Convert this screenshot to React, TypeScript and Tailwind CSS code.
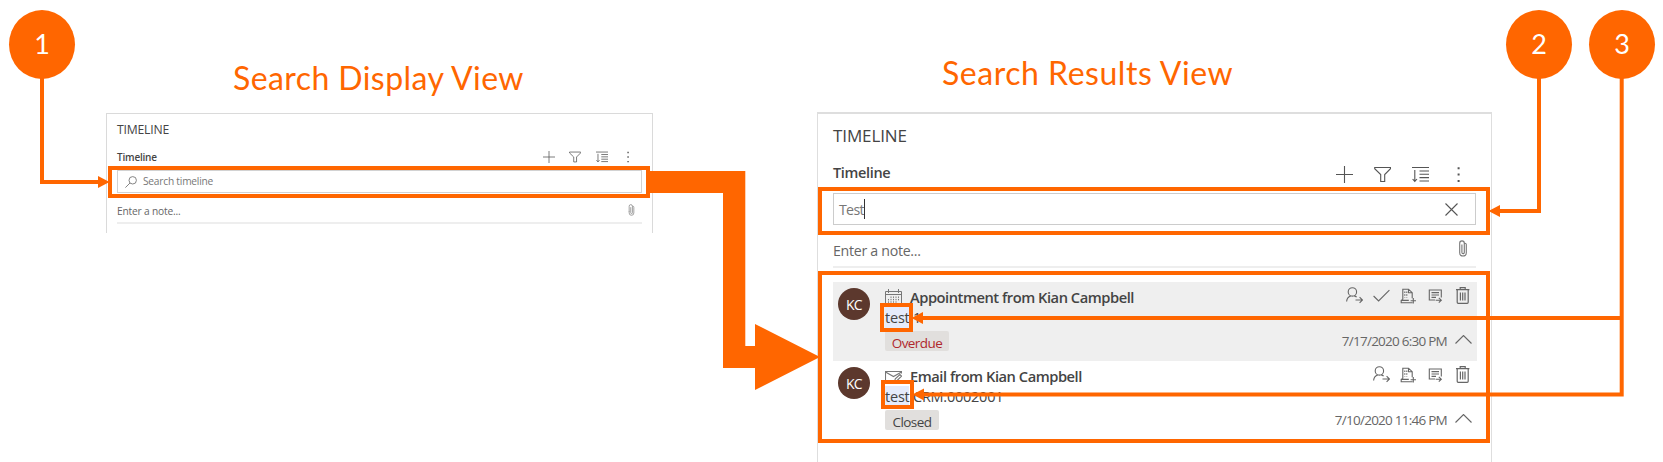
import React from "react";

const ORANGE = "#ff6600";

type IconProps = { className?: string };

const stroke = {
  fill: "none",
  stroke: "currentColor",
  strokeWidth: 1,
} as const;

function Plus({ className }: IconProps) {
  return (
    <svg viewBox="0 0 17 17" className={className} {...stroke} strokeWidth={1.1}>
      <path d="M8.5 0v17M0 8.5h17" />
    </svg>
  );
}

function Filter({ className }: IconProps) {
  return (
    <svg viewBox="0 0 17 17" className={className} {...stroke} strokeWidth={1.1}>
      <path d="M.7 1.5h15.8v1.2l-5.8 5.8v7h-4v-7L.7 2.7z" />
    </svg>
  );
}

function Sort({ className }: IconProps) {
  return (
    <svg viewBox="0 0 17 17" className={className} {...stroke} strokeWidth={1.1}>
      <path d="M0 1.5h17M7.5 5h9.5M7.5 8.3h9.5M7.5 11.6h9.5M7.5 15h9.5M2.8 4v11.3M.6 13l2.2 2.4L5 13" />
    </svg>
  );
}

function Dots({ className }: IconProps) {
  return (
    <svg viewBox="0 0 17 17" className={className} fill="currentColor">
      <path d="M7.6 1.2h2v2h-2zM7.6 7.5h2v2h-2zM7.6 14h2v2h-2z" />
    </svg>
  );
}

function Clip({ className }: IconProps) {
  return (
    <svg viewBox="0 0 8 17" className={className} {...stroke} strokeWidth={1.1}>
      <path d="M.7 11V3.2a2.3 2.3 0 0 1 4.6 0v9.2a1.2 1.2 0 0 1-2.4 0V4.5M5.3 3.2h.5a1.4 1.4 0 0 1 1.5 1.5v8a3.3 3.3 0 0 1-6.6 0V10" />
    </svg>
  );
}

function Magnifier({ className }: IconProps) {
  return (
    <svg viewBox="0 0 12 12" className={className} {...stroke} strokeWidth={0.9}>
      <circle cx="7.7" cy="4.3" r="3.7" />
      <path d="M5 7L.4 11.6" />
    </svg>
  );
}

function Close({ className }: IconProps) {
  return (
    <svg viewBox="0 0 13 13" className={className} {...stroke} strokeWidth={1.1}>
      <path d="M.5.5l12 12M12.5.5l-12 12" />
    </svg>
  );
}

function Calendar({ className }: IconProps) {
  return (
    <svg viewBox="0 0 17 17" className={className} {...stroke}>
      <path d="M.5 2.5h16v13H.5zM.5 5.5h16M3.5 0v4M13.5 0v4" />
      <path strokeDasharray="1.4 1" d="M3.5 10v4M6 7.5v6.5M8.5 7.5v6.5M11 7.5v6.5M13.5 7.5v4" />
    </svg>
  );
}

function Mail({ className }: IconProps) {
  return (
    <svg viewBox="0 0 17 12" className={className} {...stroke} strokeWidth={1.1}>
      <path d="M8 11.5H.5V1.5h16v2M.5 2l8 4.5 8-4.5" />
      <path d="M9.5 11.5l.8-2.6 4.6-4.4 1.6 1.6-4.6 4.6z" />
    </svg>
  );
}

function Assign({ className }: IconProps) {
  return (
    <svg viewBox="0 0 17 17" className={className} {...stroke} strokeWidth={1.1}>
      <circle cx="6.4" cy="4.9" r="4.2" />
      <path d="M.6 14.5c.3-3 2-4.7 4.2-5.4M8.2 8.9c1 .2 1.8.6 2.4 1.3M9.5 13h6.8M13.6 10.2l2.8 2.8-2.8 2.8" />
    </svg>
  );
}

function Check({ className }: IconProps) {
  return (
    <svg viewBox="0 0 17 17" className={className} {...stroke} strokeWidth={1.1}>
      <path d="M.6 9l5 5L16.4 3.2" />
    </svg>
  );
}

function AddDoc({ className }: IconProps) {
  return (
    <svg viewBox="0 0 17 17" className={className} {...stroke} strokeWidth={1.1}>
      <path d="M2.8 12.5V2.2h5.7l3.7 3.5v5.6M8.5 2.2v3.6h3.7M2.800 12.500l-1.600.8v2.500h11.300M1.200 13.400h7.600M13.300 11v5.500M10.600 13.700H16" />
      <path strokeDasharray="1.5 1.2" d="M4.800 4.500v6M6.800 4.500v6" />
    </svg>
  );
}

function Queue({ className }: IconProps) {
  return (
    <svg viewBox="0 0 17 17" className={className} {...stroke} strokeWidth={1.1}>
      <path d="M8 13H2.300V3h12v7.500M4.500 5.600h7.500M4.500 8h7.500M4.500 10.400h4.500M8.600 13.200h5.600M11.800 10.800l2.500 2.400-2.500 2.400" />
    </svg>
  );
}

function Trash({ className }: IconProps) {
  return (
    <svg viewBox="0 0 17 17" className={className} {...stroke} strokeWidth={1.2}>
      <path d="M2 2.7h13.4M6.2 2.5V.7h5v1.8M3.2 2.7v12.6q0 1 1 1h9q1 0 1-1V2.7M6.4 5.5v8M8.7 5.5v8M11 5.5v8" />
    </svg>
  );
}

function Chevron({ className }: IconProps) {
  return (
    <svg viewBox="0 0 17 9" className={className} {...stroke} strokeWidth={1.1}>
      <path d="M.5 8.5l8-8 8 8" />
    </svg>
  );
}

type EntryProps = {
  kind: "appointment" | "email";
  title: string;
  rest: string;
  status: string;
  date: string;
};

function Entry({ kind, title, rest, status, date }: EntryProps) {
  const appt = kind === "appointment";
  return (
    <div className={`flex h-[79px] w-[644px] ${appt ? "bg-[#efefef]" : "bg-white"}`}>
      <div className="ml-[5px] mt-1.5 flex size-8 items-center justify-center rounded-full bg-[#5c382d] text-[14px] font-medium tracking-[-0.6px] text-white">
        KC
      </div>
      <div className="ml-[15px] flex flex-col items-start">
        <div className="mt-[5px] flex h-5 items-center">
          <span className="flex h-4 w-[17px] items-center">
            {appt ? (
              <Calendar className="h-[17px] w-[17px] text-[#777]" />
            ) : (
              <Mail className="h-3 w-[17px] text-[#777]" />
            )}
          </span>
          <span
            className="ml-2 whitespace-nowrap text-[14.7px] font-semibold leading-5 tracking-[-0.47px] text-[#444]"
          >
            {title}
          </span>
        </div>
        <div className="flex h-[21px] items-center text-[14.5px] leading-[21px] text-[#444]">
          <span className="w-6 bg-[#e5ebfb] tracking-[-0.2px]">test</span>
          <span className="ml-1 tracking-[-0.25px]">{rest}</span>
        </div>
        <div
          className={`mt-[3px] flex h-5 items-center justify-center rounded-[2px] bg-[#e1dfdd] pt-[3px] text-[13.5px] leading-5 tracking-[-0.55px] ${appt ? "w-16 text-[#b0282c]" : "w-[54px] text-[#444]"}`}
        >
          {status}
        </div>
      </div>
      <div className="ml-auto mr-[5px] flex flex-col items-end text-[#666]">
        <div className="mr-px mt-[5px] flex items-center gap-2.5">
          <Assign className="size-[17px]" />
          {appt && <Check className="size-[17px]" />}
          <AddDoc className="size-[17px]" />
          <Queue className="size-[17px]" />
          <Trash className="size-[17px]" />
        </div>
        <div className="mt-[27px] flex h-5 items-center gap-2">
          <span className="text-[13.5px] leading-5 tracking-[-0.75px] text-[#666]">{date}</span>
          <Chevron className="mb-1 h-[9px] w-[17px]" />
        </div>
      </div>
    </div>
  );
}

function DisplayView() {
  return (
    <section className="ml-[106px] w-[547px]">
      <h2 className="flex h-[113px] items-end pb-[13px] pl-[127px] font-['Lato',sans-serif] text-[32px] leading-[44px] text-[#ff6600]">
        <span className="whitespace-nowrap tracking-[0.42px]">Search Display View</span>
      </h2>
      <div className="h-[120px] border border-b-0 border-[#dadada] px-2.5 text-[#444]">
        <div className="mt-1.5 h-5 text-[12.2px] leading-5 tracking-[-0.2px]">TIMELINE</div>
        <div className="mt-[9px] flex h-4 items-center justify-between">
          <span className="text-[10px] font-semibold tracking-[-0.2px]">Timeline</span>
          <div className="mr-2 flex gap-[14.5px] text-[#555]">
            <Plus className="size-3" />
            <Filter className="size-3" />
            <Sort className="size-3" />
            <Dots className="size-3" />
          </div>
        </div>
        <div className="mt-[5px] flex h-[23px] items-center border border-[#d2d2d2] pl-[7px] text-[10.2px] text-[#777]">
          <Magnifier className="size-3" />
          <span className="ml-1.5 pt-px tracking-[-0.22px]">Search timeline</span>
        </div>
        <div className="flex h-[31px] items-center justify-between border-b-2 border-[#eeeeee] pt-2 text-[10.2px] tracking-[-0.18px] text-[#666]">
          <span>Enter a note...</span>
          <Clip className="mb-1 mr-[7px] h-3 w-[7px] text-[#888]" />
        </div>
      </div>
    </section>
  );
}

function ResultsView() {
  return (
    <section className="ml-[164px] w-[675px]">
      <h2 className="flex h-28 items-end pb-[17px] pl-[125px] font-['Lato',sans-serif] text-[32px] leading-[44px] text-[#ff6600]">
        <span className="whitespace-nowrap tracking-[0.53px]">Search Results View</span>
      </h2>
      <div className="h-[350px] border border-b-0 border-t-2 border-[#dedede] px-[15px] text-[#444]">
        <div className="mt-2.5 h-6 text-[17px] leading-6 tracking-[-0.1px]">TIMELINE</div>
        <div className="mt-[15px] flex h-5 items-center justify-between">
          <span className="text-[14.5px] font-semibold tracking-[-0.35px]">Timeline</span>
          <div className="mr-[9px] mt-[3px] flex gap-[21px] text-[#555]">
            <Plus className="size-[17px]" />
            <Filter className="size-[17px]" />
            <Sort className="size-[17px]" />
            <Dots className="size-[17px]" />
          </div>
        </div>
        <div className="mt-2.5 flex h-8 items-center border border-[#cccccc] pl-[5px] text-[14.2px] text-[#777]">
          <span className="pt-0.5 tracking-[-0.7px]">Test</span>
          <span className="h-5 w-px bg-[#333]" />
          <Close className="ml-auto mr-[17px] size-[13px] text-[#555]" />
        </div>
        <div className="flex h-[43px] items-center justify-between border-b-2 border-[#eeeeee] pt-2.5 text-[14.2px] tracking-[-0.3px] text-[#666]">
          <span>Enter a note...</span>
          <Clip className="mb-1 mr-[9px] h-[17px] w-2 text-[#777]" />
        </div>
        <div className="mt-3.5">
          <Entry
            kind="appointment"
            title="Appointment from Kian Campbell"
            rest="1"
            status="Overdue"
            date="7/17/2020 6:30 PM"
          />
          <Entry
            kind="email"
            title="Email from Kian Campbell"
            rest="CRM:0002001"
            status="Closed"
            date="7/10/2020 11:46 PM"
          />
        </div>
      </div>
    </section>
  );
}

function Callouts() {
  return (
    <>
      <svg
        className="pointer-events-none absolute inset-0"
        width="1663"
        height="462"
        viewBox="0 0 1663 462"
        fill="none"
        stroke={ORANGE}
        strokeWidth={4}
      >
        <rect x="110" y="168" width="538" height="28" />
        <rect x="820" y="189" width="668" height="44" />
        <rect x="820" y="273" width="668" height="168" />
        <rect x="882" y="305" width="29" height="25" />
        <rect x="883" y="382" width="29" height="25" />
        <path d="M42 75V182H99" />
        <path d="M1539 75V211H1499" />
        <path d="M1621.7 75V394.5H923M1621.7 318H922" />
        <g fill={ORANGE} stroke="none">
          <path d="M98 176l11.5 6-11.5 6z" />
          <path d="M1500 205l-11.5 6 11.5 6z" />
          <path d="M923 312l-11.5 6 11.5 6z" />
          <path d="M924 388.500l-11.5 6 11.5 6z" />
          <path d="M648 171H745.300V346H755V324L820 357L755 390V368H723V193H648z" />
        </g>
      </svg>
      <div className="absolute left-[9px] top-2.5 flex h-[69px] w-[66px] items-center justify-center rounded-[50%] bg-[#ff6600] font-['Lato',sans-serif] text-[27px] text-white">
        1
      </div>
      <div className="absolute left-[1506px] top-2.5 flex h-[69px] w-[66px] items-center justify-center rounded-[50%] bg-[#ff6600] font-['Lato',sans-serif] text-[27px] text-white">
        2
      </div>
      <div className="absolute left-[1589px] top-2.5 flex h-[69px] w-[66px] items-center justify-center rounded-[50%] bg-[#ff6600] font-['Lato',sans-serif] text-[27px] text-white">
        3
      </div>
    </>
  );
}

export default function App() {
  return (
    <main className="relative flex h-[462px] w-[1663px] overflow-hidden bg-white font-['Open_Sans','Noto_Sans',sans-serif]">
      <DisplayView />
      <ResultsView />
      <Callouts />
    </main>
  );
}
